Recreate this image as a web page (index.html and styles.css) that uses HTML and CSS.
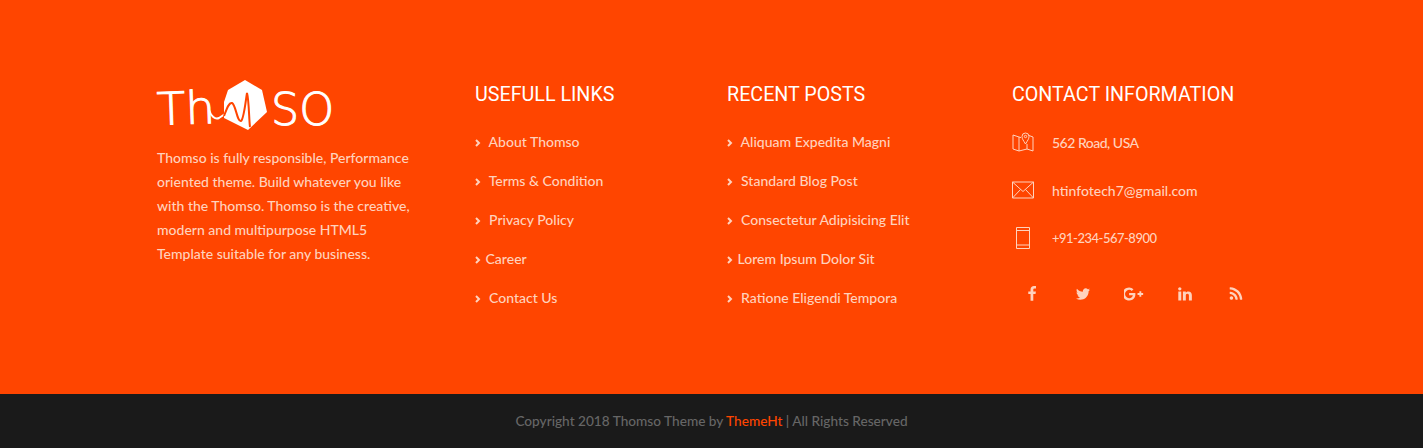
FILE: index.html
```html
<!DOCTYPE html>
<html lang="en">
<head>
    <meta charset="UTF-8">
    <title>Thomso</title>
    <link rel="stylesheet" href="styles.css">
</head>
<body>
  <footer class="footer-main">
    <div class="container">
      <div class="about-col">
        <svg class="logo" width="176" height="52" viewBox="0 0 176 52">
          <text class="logo-text" x="0" y="44" textLength="58" lengthAdjust="spacingAndGlyphs" transform="rotate(-2 30 30)">Th</text>
          <path class="logo-tail" d="M52 30 C54 36 58 40 62 38 L68 34"/>
          <path class="logo-hex" d="M71 10 L88 0 L105 10 L110 32 L91 50 L67 38 L67 22 Z"/>
          <path class="logo-wave" d="M67 36 C70 28 72 22 75 23 C79 25 80 42 84 41 C87 39 89 18 90 13 C92 20 92 40 93 47"/>
          <text class="logo-text" x="114" y="45" textLength="63" lengthAdjust="spacingAndGlyphs">SO</text>
        </svg>
        <p class="about-text">Thomso is fully responsible, Performance oriented theme. Build whatever you like with the Thomso. Thomso is the creative, modern and multipurpose HTML5 Template suitable for any business.</p>
      </div>

      <div class="links-col">
        <h4>USEFULL LINKS</h4>
        <ul class="link-list">
          <li><svg class="chev" viewBox="0 0 6 8"><path d="M1 1l3 3-3 3"/></svg> &nbsp;About Thomso</li>
          <li><svg class="chev" viewBox="0 0 6 8"><path d="M1 1l3 3-3 3"/></svg> &nbsp;Terms &amp; Condition</li>
          <li><svg class="chev" viewBox="0 0 6 8"><path d="M1 1l3 3-3 3"/></svg> &nbsp;Privacy Policy</li>
          <li><svg class="chev" viewBox="0 0 6 8"><path d="M1 1l3 3-3 3"/></svg> Career</li>
          <li><svg class="chev" viewBox="0 0 6 8"><path d="M1 1l3 3-3 3"/></svg> &nbsp;Contact Us</li>
        </ul>
      </div>

      <div class="links-col">
        <h4>RECENT POSTS</h4>
        <ul class="link-list">
          <li><svg class="chev" viewBox="0 0 6 8"><path d="M1 1l3 3-3 3"/></svg> &nbsp;Aliquam Expedita Magni</li>
          <li><svg class="chev" viewBox="0 0 6 8"><path d="M1 1l3 3-3 3"/></svg> &nbsp;Standard Blog Post</li>
          <li><svg class="chev" viewBox="0 0 6 8"><path d="M1 1l3 3-3 3"/></svg> &nbsp;Consectetur Adipisicing Elit</li>
          <li><svg class="chev" viewBox="0 0 6 8"><path d="M1 1l3 3-3 3"/></svg> Lorem Ipsum Dolor Sit</li>
          <li><svg class="chev" viewBox="0 0 6 8"><path d="M1 1l3 3-3 3"/></svg> &nbsp;Ratione Eligendi Tempora</li>
        </ul>
      </div>

      <div class="contact-col">
        <h4>CONTACT INFORMATION</h4>
        <ul class="contact-list">
          <li>
            <svg class="contact-icon" width="22" height="20" viewBox="0 0 22 20">
              <path d="M7 5L1 3v14l6 2 8-2 6 2V5l-4-1.500M7 5v14M15 12v5M7 5l2 .6"/>
              <path d="M13.500 12C11.500 8.500 10 7 10 4.500a3.500 3.500 0 0 1 7 0C17 7 15.500 8.500 13.500 12z"/>
              <circle cx="13.500" cy="4.500" r="1.200"/>
            </svg>
            <span class="tight">562 Road, USA</span>
          </li>
          <li>
            <svg class="contact-icon" width="22" height="18" viewBox="0 0 22 18">
              <path d="M.5 1h21v16H.5zM.5 1L11 10.500 21.500 1M.5 17l8-8.500M21.500 17l-8-8.500"/>
            </svg>
            htinfotech7@gmail.com
          </li>
          <li>
            <svg class="contact-icon" width="22" height="22" viewBox="0 0 22 22">
              <path d="M4.500.5h13v21h-13zM4.500 3.500h13M4.500 18h13"/>
            </svg>
            <span class="tight phone">+91-234-567-8900</span>
          </li>
        </ul>
        <div class="social">
          <a><svg width="16" height="16" viewBox="0 0 1792 1792"><path d="M1343 12v264h-157q-86 0-116 36t-30 108v189h293l-39 296h-254v759h-306v-759h-255v-296h255v-218q0-186 104-288.500t277-102.500q147 0 228 12z"/></svg></a>
          <a><svg width="16" height="16" viewBox="0 0 1792 1792"><path d="M1684 408q-67 98-162 167 1 14 1 42 0 130-38 259.500t-115.500 248.500-184.500 210.500-258 146-323 54.500q-271 0-496-145 35 4 78 4 225 0 401-138-105-2-188-64.500t-114-159.500q33 5 61 5 43 0 85-11-112-23-185.500-111.500t-73.500-205.500v-4q68 38 146 41-66-44-105-115t-39-154q0-88 44-163 121 149 294.500 238.500t371.500 99.500q-8-38-8-74 0-134 94.500-228.500t228.500-94.500q140 0 236 102 109-21 205-78-37 115-142 178 92-10 184-50z"/></svg></a>
          <a><svg width="20" height="16" viewBox="0 0 2048 1792"><path d="M1181 913q0 208-87 370.500t-248 254-369 91.500q-149 0-285-58t-234-156-156-234-58-285 58-285 156-234 234-156 285-58q286 0 491 192l-199 191q-117-113-292-113-123 0-227.500 62t-165.500 168.500-61 232.500 61 232.500 165.500 168.500 227.500 62q83 0 152.500-23t114.500-57.500 78.500-78.500 49-83 21.500-74h-416v-252h692q12 63 12 122zm867-122v210h-209v209h-210v-209h-209v-210h209v-209h210v209h209z"/></svg></a>
          <a><svg width="16" height="16" viewBox="0 0 1792 1792"><path d="M477 625v991h-330v-991h330zm21-306q1 73-50.500 122t-135.500 49h-2q-82 0-132-49t-50-122q0-74 51.500-122.500t134.500-48.500 133 48.500 51 122.500zm1166 729v568h-329v-530q0-105-40.500-164.500t-126.500-59.500q-63 0-105.500 34.500t-63.500 85.500q-11 30-11 81v553h-329q2-399 2-647t-1-296l-1-48h329v144h-2q20-32 41-56t56.500-52 87-43.500 114.500-15.500q171 0 275 113.500t104 332.500z"/></svg></a>
          <a><svg width="16" height="16" viewBox="0 0 1792 1792"><path d="M576 1344q0 80-56 136t-136 56-136-56-56-136 56-136 136-56 136 56 56 136zm512 123q2 28-17 48-18 21-47 21h-135q-25 0-43-16.500t-20-41.500q-22-229-184.500-391.500t-391.500-184.500q-25-2-41.500-20t-16.500-43v-135q0-29 21-47 17-17 43-17h5q160 13 306 80.500t259 181.500q114 113 181.500 259t80.500 306zm512 2q2 27-18 47-18 20-46 20h-143q-26 0-44.500-17.500t-19.500-42.500q-12-215-101-408.500t-231.500-336-336-231.500-408.500-102q-25-1-42.500-19.500t-17.500-43.500v-143q0-28 20-46 18-18 44-18h3q262 13 501.500 120t425.500 294q187 186 294 425.500t120 501.500z"/></svg></a>
        </div>
      </div>
    </div>
  </footer>

  <div class="copyright">
    Copyright 2018 Thomso Theme by <a>ThemeHt</a> | All Rights Reserved
  </div>
</body>
</html>
```

FILE: styles.css
```css
body {
    margin: 0;
    font-family: "Lato", sans-serif;
    font-size: 14px;
    font-weight: 500;
    color: #ffd2bd;
}

/* main orange part */
.footer-main {
    background-color: #ff4500;
    height: 394px;
    box-sizing: border-box;
    padding-top: 80px;
}

.container {
    width: 1140px;
    margin: 0 auto;
    display: grid;
    grid-template-columns: 318px 252px 285px 285px;
}

.container > div {
    padding: 0 15px 0 15.5px;
}

.logo {
    display: block;
    overflow: visible;
}

.logo-text {
    font-family: "DejaVu Sans", sans-serif;
    font-size: 45px;
    font-weight: 200;
    fill: #fff;
    stroke: #fff;
    stroke-width: 1;
}

.logo-tail {
    fill: none;
    stroke: #fff;
    stroke-width: 2;
}

.logo-hex {
    fill: #fff;
}

.logo-wave {
    fill: none;
    stroke: #ff4500;
    stroke-width: 2;
}

.about-text {
    margin: 14px 0 0 0;
    line-height: 24px;
    width: 258px;
}

h4 {
    margin: 0;
    height: 28px;
    line-height: 30px;
    font-family: "Roboto", sans-serif;
    font-size: 19.7px;
    font-weight: 400;
    color: #fff;
}

.link-list, .contact-list {
    list-style: none;
    margin: 0;
    padding: 0;
}

.link-list {
    margin-top: 14px;
}

.link-list li {
    height: 39px;
    line-height: 39px;
    white-space: pre-wrap;
}

.chev {
    width: 6px;
    height: 8px;
    margin-right: 1px;
    fill: none;
    stroke: #ffd2bd;
    stroke-width: 2;
}

.contact-list {
    margin-top: 10px;
}

.contact-list li {
    display: flex;
    align-items: center;
    height: 48px;
}

.contact-icon {
    margin-right: 18px;
    fill: none;
    stroke: #ffd2bd;
    stroke-width: 1;
}

.tight {
    letter-spacing: -0.5px;
}

.phone {
    font-size: 13px;
}

.social {
    display: flex;
    margin-top: 20px;
}

.social a {
    width: 40px;
    height: 24px;
    margin-right: 11px;
    display: flex;
    align-items: center;
    justify-content: center;
    fill: #ffd2bd;
}

/* dark bottom bar */
.copyright {
    background-color: #1a1a1a;
    height: 54px;
    line-height: 54px;
    text-align: center;
    font-size: 13.65px;
    color: #666;
}

.copyright a {
    color: #ff4500;
}
```
